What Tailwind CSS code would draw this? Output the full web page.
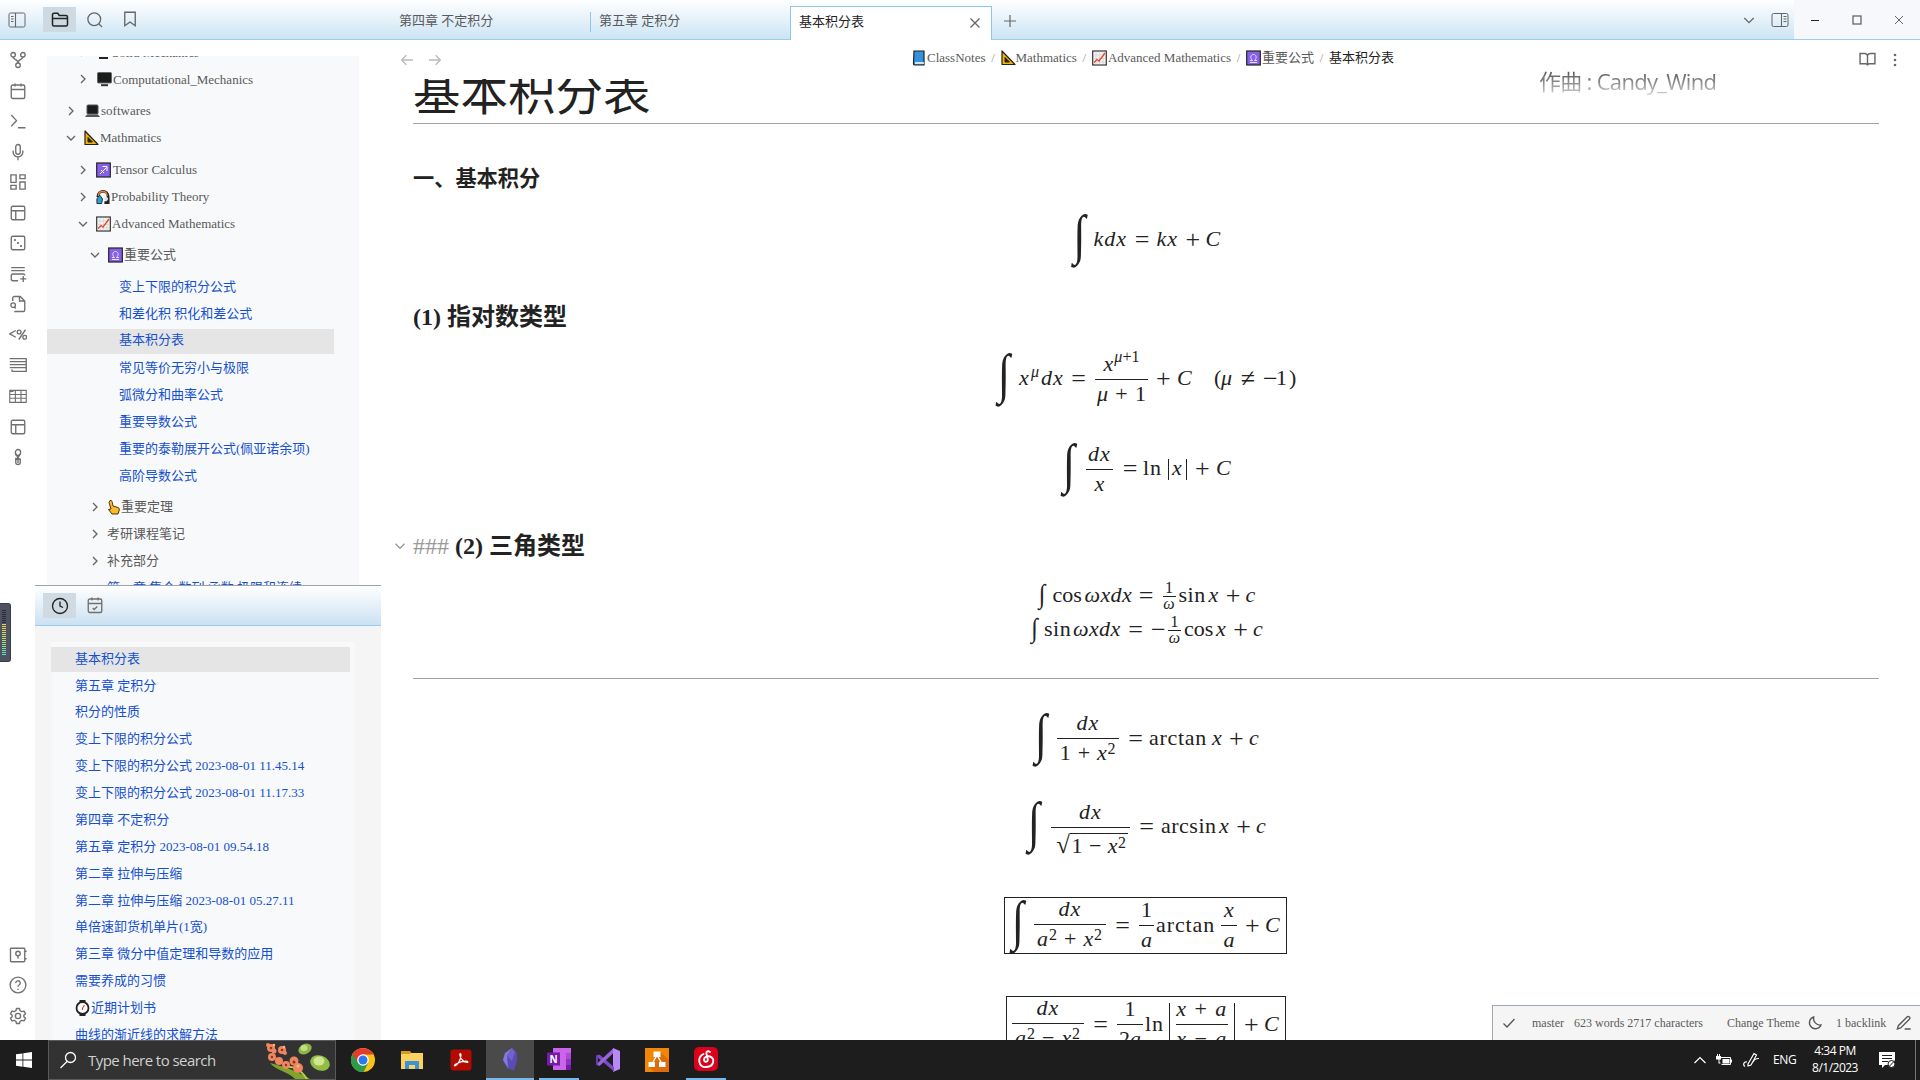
<!DOCTYPE html>
<html lang="zh-CN">
<head>
<meta charset="utf-8">
<title>基本积分表</title>
<script src="https://cdn.jsdelivr.net/npm/@tailwindcss/browser@4"></script>
</head>
<body class="w-[1920px] h-[1080px] overflow-hidden bg-white font-['Liberation_Serif','Noto_Sans_CJK_SC',serif] text-[13px] text-[#5a5a5a] flex flex-col">
<svg class="hidden">
  <defs>
    <symbol id="right" viewBox="0 0 24 24"><path d="m9 18 6-6-6-6"/></symbol>
    <symbol id="down" viewBox="0 0 24 24"><path d="m6 9 6 6 6-6"/></symbol>
    <symbol id="ruler" viewBox="0 0 15 16"><path d="M1 1v13.5h13z" fill="#f5b400" stroke="#222" stroke-width="1.2" stroke-linejoin="round"/><path d="M4 7.500v4.500h4.500z" fill="#222" stroke="#222" stroke-width="1"/></symbol>
    <symbol id="chart" viewBox="0 0 15 16"><rect x=".7" y="1" width="13.600" height="14" fill="#f3f3f3" stroke="#333" stroke-width="1.200"/><path d="M4 1.500v13M7.500 1.500v13M11 1.500v13M1 5h13M1 8.500h13M1 12h13" stroke="#ccc" stroke-width=".6"/><path d="M2 12.500l3-3 2 1.500 6-8" fill="none" stroke="#e8452c" stroke-width="1.300"/></symbol>
    <symbol id="omega" viewBox="0 0 15 16"><rect x=".7" y="1" width="13.600" height="14" fill="#8661e8" stroke="#222" stroke-width="1.200"/><path d="M4 12.500h7M4 10.500h2.500c-3-3-1.500-6 1-6s4 3 1 6H11" fill="none" stroke="#e9defc" stroke-width="1"/></symbol>
    <symbol id="calendar" viewBox="0 0 24 24"><rect x="3" y="4" width="18" height="18" rx="2"/><path d="M16 2v4M8 2v4M3 10h18"/></symbol>
    <symbol id="layout" viewBox="0 0 24 24"><rect x="3" y="3" width="18" height="18" rx="2"/><path d="M3 9h18M9 21V9"/></symbol>
  </defs>
</svg>

<!-- title bar -->
<header class="h-10 shrink-0 flex border-b border-[#9bcdf0] bg-linear-to-b from-white to-[#cbe4f4] [&_svg]:fill-none [&_svg]:stroke-[#666] [&_svg]:shrink-0">
  <div class="w-[390px] flex items-start pt-[7px]">
    <svg class="ml-[8px] mt-[4px] size-[18px]" viewBox="0 0 18 18"><rect x="1" y="2" width="16" height="14" rx="1.500"/><path d="M7.500 2v14M3 5.500h2.500M3 8h2.500M3 10.500h2.500" stroke-width="1.100"/></svg>
    <div class="ml-[17px] w-[33px] h-[25px] bg-[#cddae3] flex items-center justify-center"><svg class="size-[18px] stroke-[#222]!" viewBox="0 0 24 24" stroke-width="2"><path d="M22 9v9a2 2 0 0 1-2 2H4a2 2 0 0 1-2-2V5c0-1.100.900-2 2-2h5l2 3h9a2 2 0 0 1 2 2zM2 10h20"/></svg></div>
    <svg class="ml-[10px] mt-[4px] size-[18px]" viewBox="0 0 24 24" stroke-width="1.700"><circle cx="11" cy="11" r="8.500"/><path d="m21.500 21.500-4.500-4.500"/></svg>
    <svg class="ml-[17px] mt-[3px] size-[18px]" viewBox="0 0 24 24" stroke-width="1.800"><path d="m19 21-7-5-7 5V3h14z"/></svg>
  </div>
  <div class="w-[201px] mt-3 h-5 border-r border-[#8cc8ee] pl-[9px] leading-[18px]">第四章 不定积分</div>
  <div class="w-[199px] mt-3 h-5 pl-[8px] leading-[18px]">第五章 定积分</div>
  <div class="w-[202px] mt-[6px] h-[34px] bg-white border border-b-0 border-[#8cc8ee] pl-[8px] pr-[9px] flex items-center justify-between text-[#222] leading-[18px]"><span class="-mt-[4px]">基本积分表</span><svg class="size-[14px] -mt-[2px]" viewBox="0 0 14 14" stroke-width="1.300"><path d="M2.500 2.500l9 9M11.500 2.500l-9 9"/></svg></div>
  <svg class="ml-[11px] mt-[14px] size-[14px]" viewBox="0 0 14 14" stroke-width="1.200"><path d="M7 1v12M1 7h12"/></svg>
  <div class="flex-1 flex justify-end items-center">
    <svg class="size-[14px] mr-[15px]" viewBox="0 0 24 24" stroke-width="2.200"><path d="m4 8.500 8 8 8-8"/></svg>
    <svg class="size-[18px] mr-[5px]" viewBox="0 0 18 18"><rect x="1" y="2.500" width="16" height="13" rx="1.500"/><path d="M10.500 2.500v13M12.500 5.500h3M12.500 8h3M12.500 10.500h3" stroke-width="1.100"/></svg>
  </div>
  <div class="w-[126px] h-[39px] bg-[#f7f8fb] flex items-center justify-around">
    <svg class="size-[10px]" viewBox="0 0 10 10"><path d="M1 5.500h8" stroke="#222"/></svg>
    <svg class="size-[10px]" viewBox="0 0 10 10"><rect x="1" y="1" width="8" height="8" stroke-width="1.300"/></svg>
    <svg class="size-[10px]" viewBox="0 0 10 10"><path d="M1 1l8 8M9 1l-8 8"/></svg>
  </div>
</header>

<div class="flex h-[1000px] shrink-0 relative">
  <!-- ribbon -->
  <nav class="w-[35px] shrink-0 flex flex-col items-center pl-[1px] pt-[11px] pb-[15px] [&_svg]:size-[18px] [&_svg]:shrink-0 [&_svg]:fill-none [&_svg]:stroke-[#707070] [&_svg]:stroke-[1.8px] gap-[12.550px]">
    <svg viewBox="0 0 24 24"><circle cx="5.500" cy="5" r="3"/><circle cx="18.500" cy="5" r="3"/><circle cx="12" cy="19" r="3"/><path d="M5.500 8c0 4 6.500 2 6.500 8M18.500 8c0 4-6.500 2-6.500 8"/></svg>
    <svg><use href="#calendar"/></svg>
    <svg viewBox="0 0 24 24"><path d="m3 4 7 7.500L3 19M12 21h10"/></svg>
    <svg viewBox="0 0 24 24"><rect x="9" y="2" width="6" height="13" rx="3"/><path d="M5.500 10v2a6.500 6.500 0 0 0 13 0v-2M12 18.500V23"/></svg>
    <svg viewBox="0 0 24 24"><path d="M2.500 2.500h7v10h-7zM14.500 2.500h7v5h-7zM14.500 12h7v9.500h-7zM2.500 16.500h7v5h-7z"/></svg>
    <svg><use href="#layout"/></svg>
    <svg viewBox="0 0 24 24"><rect x="3" y="3" width="18" height="18" rx="2"/><path d="M8 6.800v2.400M12 10.800v2.400M16 14.800v2.400M6.800 8h2.400M10.800 12h2.400M14.800 16h2.400"/></svg>
    <svg viewBox="0 0 24 24"><path d="M3 3.500h18M3 7.500h18M12 21H5a2 2 0 0 1-2-2v-5a2 2 0 0 1 2-2h14a2 2 0 0 1 2 2M19 14.500v8M15 18.500h8"/></svg>
    <svg viewBox="0 0 24 24"><path d="M5 8V4a2 2 0 0 1 2-2h8l6 6v12a2 2 0 0 1-2 2H7M14 2v6h6M9 18l-2-2"/><circle cx="5.500" cy="13.500" r="3"/></svg>
    <svg viewBox="0 0 24 24"><path d="M9 6 1 10.500 9 15M22 5 13 18"/><circle cx="13.500" cy="8" r="2.500"/><circle cx="21" cy="15" r="2.500"/></svg>
    <svg viewBox="0 0 24 24"><path d="M1 3.500h22M1 7.500h22M1 11.500h22M1 15.500h22M4 20.500h19V3M4 18v3"/></svg>
    <svg viewBox="0 0 24 24" class="stroke-[1.500px]!"><path d="M1 4.500h22v16H1zM1 10h22M1 15h22M8.500 4v16M16 4v16"/><path d="M1 6h5"/></svg>
    <svg><use href="#layout"/></svg>
    <svg viewBox="0 0 24 24"><ellipse cx="12" cy="6" rx="3.500" ry="4"/><path d="M9 7c-1 4 5 5 5 9M14 8c1 4-6 6-5 10M9 13v6c0 4 6 4 6 0v-5M12 11v9"/></svg>
    <div class="flex-1"></div>
    <svg viewBox="0 0 24 24"><rect x="2" y="3" width="19" height="18" rx="1"/><circle cx="12" cy="10" r="3"/><path d="M12 13v4M21 7h2.500M21 17h2.500"/></svg>
    <svg viewBox="0 0 24 24"><circle cx="12" cy="12" r="10.500"/><path d="M9 9.500a3 3 0 1 1 4.500 2.500c-1 .6-1.500 1-1.500 2.300M12 17v1.500"/></svg>
    <svg viewBox="0 0 24 24"><circle cx="12" cy="12" r="3.500"/><path d="M10 2h4l.8 3 2.200 1.200 3-.8 2 3.500-2.200 2.100v2l2.200 2.100-2 3.500-3-.8-2.200 1.200-.8 3h-4l-.8-3L7 17.800l-3 .8-2-3.500L4.200 13v-2L2 8.900l2-3.500 3 .8L9.200 5z" stroke-linejoin="round"/></svg>
  </nav>

  <!-- side dock -->
  <aside class="w-[346px] shrink-0 flex flex-col">
    <div class="h-[545px] shrink-0 pt-4">
      <div class="ml-3 w-[312px] h-[529px] overflow-hidden bg-[#f8f9fb]">
        <div class="-mt-[16.500px] [&>div]:h-[26.900px] [&>div]:flex [&>div]:items-center [&>div]:whitespace-nowrap [&_svg]:shrink-0 [&>div]:pb-px">
          <div class="pl-[28px]"><svg class="size-4 fill-none stroke-[#666] stroke-2"><use href="#right"/></svg><svg class="ml-[5px] mr-px w-[15px] h-4" viewBox="0 0 15 16"><rect x="0" y="1" width="15" height="11" rx="1" fill="#222"/><path d="M3 14h9" stroke="#222" stroke-width="2"/></svg><span>Solid Mechanics</span></div>
          <div class="pl-[28px]"><svg class="size-4 fill-none stroke-[#666] stroke-2"><use href="#right"/></svg><svg class="ml-[6px] mr-px w-[15px] h-4" viewBox="0 0 15 16"><rect x=".5" y="1.500" width="14" height="10.500" rx="1" fill="#1c1c1c" stroke="#666"/><path d="M4 14.200h7" stroke="#333" stroke-width="2"/></svg><span>Computational_Mechanics</span></div>
          <div class="mt-[5px] pl-4"><svg class="size-4 fill-none stroke-[#666] stroke-2"><use href="#right"/></svg><svg class="ml-[6px] mr-px w-[15px] h-4" viewBox="0 0 15 16"><rect x="2" y="2" width="11" height="9" rx="1" fill="#1c1c1c" stroke="#555"/><path d="M0 14h15l-2-2.500H2z" fill="#555"/></svg><span>softwares</span></div>
          <div class="pl-4"><svg class="size-4 fill-none stroke-[#666] stroke-2"><use href="#down"/></svg><svg class="ml-[5px] w-[15px] h-4 mr-px"><use href="#ruler"/></svg><span>Mathmatics</span></div>
          <div class="mt-[5px] pl-[28px]"><svg class="size-4 fill-none stroke-[#666] stroke-2"><use href="#right"/></svg><svg class="ml-[5px] mr-[2px] w-[15px] h-4" viewBox="0 0 15 16"><rect x=".7" y="1" width="13.600" height="14" fill="#8661e8" stroke="#222" stroke-width="1.200"/><path d="M4 12l6.500-6.500M6.500 4.500h4.500V9M5 8l3 3" fill="none" stroke="#fff"/></svg><span>Tensor Calculus</span></div>
          <div class="pl-[28px]"><svg class="size-4 fill-none stroke-[#666] stroke-2"><use href="#right"/></svg><svg class="ml-[5px] mr-px w-[14px] h-4" viewBox="0 0 15 16"><path d="M2 8c0-8 11-8 11 0v6H9" fill="none" stroke="#222" stroke-width="3"/><path d="M2.500 7c0-6.500 9-6.500 9.500 0" fill="none" stroke="#e08040" stroke-width="1.500"/><path d="M1 15V10l3-4 3 4-1 5z" fill="#2d9fd8" stroke="#222"/><circle cx="11" cy="10" r="2" fill="#ddd"/></svg><span>Probability Theory</span></div>
          <div class="pl-[28px]"><svg class="size-4 fill-none stroke-[#666] stroke-2"><use href="#down"/></svg><svg class="ml-[5px] w-[15px] h-4 mr-px"><use href="#chart"/></svg><span>Advanced Mathematics</span></div>
          <div class="mt-[4.500px] pl-10"><svg class="size-4 fill-none stroke-[#666] stroke-2"><use href="#down"/></svg><svg class="ml-[5px] w-[15px] h-4 mr-px"><use href="#omega"/></svg><span>重要公式</span></div>
          <div class="mt-[5px] pl-[72px] text-[#1450cf]">变上下限的积分公式</div>
          <div class="pl-[72px] text-[#1450cf]">和差化积 积化和差公式</div>
          <div class="w-[287px] text-[#1450cf]"><span class="w-full bg-[#e5e5e5] pl-[72px] h-[25px] mt-[2px] leading-[22px]">基本积分表</span></div>
          <div class="pl-[72px] text-[#1450cf]">常见等价无穷小与极限</div>
          <div class="pl-[72px] text-[#1450cf]">弧微分和曲率公式</div>
          <div class="pl-[72px] text-[#1450cf]">重要导数公式</div>
          <div class="pl-[72px] text-[#1450cf]">重要的泰勒展开公式(佩亚诺余项)</div>
          <div class="pl-[72px] text-[#1450cf]">高阶导数公式</div>
          <div class="mt-[5px] pl-10"><svg class="size-4 fill-none stroke-[#666] stroke-2"><use href="#right"/></svg><svg class="ml-[4px] mr-px w-[13px] h-4" viewBox="0 0 13 16"><path d="M3 1.500c1.500-.5 2 .5 2.300 2L6 7l5 1.500c1.500.5 1.500 2 1 3.500l-1 3H5L1.500 10.500 4 10 2 3.500z" fill="#fcb827" stroke="#4a3510"/></svg><span>重要定理</span></div>
          <div class="pl-10"><svg class="mr-1 size-4 fill-none stroke-[#666] stroke-2"><use href="#right"/></svg>考研课程笔记</div>
          <div class="pl-10"><svg class="mr-1 size-4 fill-none stroke-[#666] stroke-2"><use href="#right"/></svg>补充部分</div>
          <div class="pl-[60px] text-[#1450cf]">第一章 集合 数列 函数 极限和连续</div>
        </div>
      </div>
    </div>
    <div class="h-[41px] shrink-0 border-t border-t-[#9da3a9] border-b border-b-[#9bcdf0] bg-linear-to-b from-white to-[#cbe1f2] flex items-start pt-[7px] pl-2">
      <div class="w-[33px] h-[25px] bg-[#d0dae2] flex items-center justify-center"><svg class="size-[18px] fill-none stroke-[#222] stroke-[1.8px]" viewBox="0 0 24 24"><circle cx="12" cy="12" r="10"/><path d="M12 6v6l4 2"/></svg></div>
      <svg class="ml-[10px] mt-[3px] size-[18px] fill-none stroke-[#707070] stroke-[1.8px]" viewBox="0 0 24 24"><rect x="3" y="4" width="18" height="18" rx="2"/><path d="M16 2v4M8 2v4M3 10h18M9 16l2 2 4-4"/></svg>
    </div>
    <div class="h-[414px] bg-[#f5f5f5] pt-4 pl-4 overflow-hidden">
      <div class="w-[304px] h-[420px] bg-[#f8f9fb] pt-[3px] text-[#1450cf] [&>div]:h-[26.880px] [&>div]:flex [&>div]:items-center [&>div]:pl-6 [&>div]:whitespace-nowrap">
        <div class="pl-0!"><span class="w-[299px] h-[25px] mt-[2px] bg-[#e5e5e5] pl-6 leading-[23px]">基本积分表</span></div>
        <div>第五章 定积分</div>
        <div>积分的性质</div>
        <div>变上下限的积分公式</div>
        <div>变上下限的积分公式 2023-08-01 11.45.14</div>
        <div>变上下限的积分公式 2023-08-01 11.17.33</div>
        <div>第四章 不定积分</div>
        <div>第五章 定积分 2023-08-01 09.54.18</div>
        <div>第二章 拉伸与压缩</div>
        <div>第二章 拉伸与压缩 2023-08-01 05.27.11</div>
        <div>单倍速卸货机单片(1宽)</div>
        <div>第三章 微分中值定理和导数的应用</div>
        <div>需要养成的习惯</div>
        <div><svg class="w-[15px] h-4 mr-px" viewBox="0 0 15 16"><path d="M4.500 0h6v16h-6z" fill="#222"/><circle cx="7.500" cy="8" r="6" fill="#fff" stroke="#222" stroke-width="1.800"/><path d="M7.500 8l2-3M7.500 8v2" stroke="#e33" stroke-width="1.200"/></svg>近期计划书</div>
        <div>曲线的渐近线的求解方法</div>
      </div>
    </div>
  </aside>

  <!-- note -->
  <main class="flex-1 flex flex-col pl-[8px] overflow-hidden">
    <div class="h-[39px] shrink-0 flex items-center relative">
      <svg class="ml-[10px] size-4 fill-none stroke-[#bbb] stroke-2" viewBox="0 0 24 24"><path d="m11 5-7 7 7 7M4 12h17"/></svg>
      <svg class="ml-3 size-4 fill-none stroke-[#bbb] stroke-2" viewBox="0 0 24 24"><path d="m13 5 7 7-7 7M20 12H3"/></svg>
      <div class="ml-[469px] flex items-center h-5 pb-[4px] whitespace-nowrap [&_em]:not-italic [&_em]:text-[#999] [&_em]:w-[15px] [&_em]:text-center [&_svg]:w-[15px] [&_svg]:h-4 [&_svg]:shrink-0">
        <svg viewBox="0 0 15 16"><path d="M2 1h10v14H2.500C1.500 15 1.500 14 1.500 13z" fill="#3492dc" stroke="#222" stroke-width="1.200"/><path d="M3 13h9" stroke="#fff" stroke-width="1.500"/></svg><span>ClassNotes</span><em>/</em>
        <svg><use href="#ruler"/></svg><span>Mathmatics</span><em>/</em>
        <svg><use href="#chart"/></svg><span class="ml-px">Advanced Mathematics</span><em>/</em>
        <svg><use href="#omega"/></svg><span class="ml-px">重要公式</span><em>/</em><span class="text-[#222]">基本积分表</span>
      </div>
      <div class="flex-1"></div>
      <svg class="mr-[11px] size-[17px] fill-none stroke-[#666] stroke-2" viewBox="0 0 24 24"><path d="M1.500 3.500H8a4 4 0 0 1 4 3v14c0-1.500-1-2.500-3-2.500H1.500zM22.500 3.500H16a4 4 0 0 0-4 3v14c0-1.500 1-2.500 3-2.500h7.500z"/></svg>
      <svg class="mr-[17px] size-4 fill-[#666]" viewBox="0 0 16 16"><circle cx="8" cy="3" r="1.300"/><circle cx="8" cy="8" r="1.300"/><circle cx="8" cy="13" r="1.300"/></svg>
    </div>
    <article class="ml-[24px] w-[1466px] h-[961px] overflow-hidden text-[#222]">
      <h1 class="h-[45px] flow-root border-b border-[#9ea3ab] text-[47.500px] leading-[45px]"><span class="block -mt-[7.500px]">基本积分表</span></h1>
      <h2 class="mt-[39px] h-8 leading-8 font-bold text-[21.200px]">一、基本积分</h2>

      <div class="text-[22px] leading-6 whitespace-nowrap [&_b]:font-normal [&_u]:no-underline [&_u]:text-[26px] [&_u]:text-center [&>div]:flex [&>div]:justify-center [&>div]:items-center [&>div>*]:shrink-0 [&>div>i]:pb-[2px] [&>div>b]:pb-[2px]">
        <div class="mt-[15px] h-[60px]">
          <span class="w-[19px] text-[44px] leading-[48px] italic scale-y-[1.24] translate-x-[2px] -translate-y-[4px]">∫</span><i class="ml-[3px] w-[33px] tracking-[1px]">kdx</i><u class="ml-[8px] w-[15px]">=</u><i class="ml-[7px] w-[22px] tracking-[1px]">kx</i><u class="ml-[7px] w-[14px]">+</u><i class="ml-[6px] w-[15px]">C</i>
        </div>
        <h3 class="mt-[31px] h-8 leading-8 font-bold text-[24px]">(1) 指对数类型</h3>
        <div class="mt-[16px] h-[60px]">
          <span class="w-[19px] text-[44px] leading-[48px] italic scale-y-[1.24] translate-x-[2px] -translate-y-[4px]">∫</span><i class="ml-[4px] w-[12px]">x</i><i class="w-[10px] text-[16px] -mt-3">μ</i><i class="w-[23px] tracking-[1px]">dx</i><u class="ml-[7px] w-[15px]">=</u>
          <span class="ml-[9px] w-[53px] flex flex-col text-center"><span class="pt-[2px] pb-[3px] flex justify-center"><i class="tracking-[1px]">x</i><span class="text-[16px] -mt-[7px]"><i>μ</i><b>+1</b></span></span><span class="h-px bg-[#222]"></span><span class="pt-[2px] pb-[3px] flex justify-between px-[2px]"><i>μ</i><b>+</b><b>1</b></span></span>
          <u class="ml-[8px] w-[14px]">+</u><i class="ml-[7px] w-[16px]">C</i><b class="ml-[21px] w-[7px]">(</b><i class="w-[13px]">μ</i><u class="ml-[6px] w-[16px]">≠</u><u class="ml-[7px] w-[13px]">−</u><b class="w-[11px]">1</b><b class="ml-[2px] w-[7px]">)</b>
        </div>
        <div class="mt-[30px] h-[60px]">
          <span class="w-[19px] text-[44px] leading-[48px] italic scale-y-[1.24] translate-x-[2px] -translate-y-[4px]">∫</span>
          <span class="ml-[6px] w-[27px] flex flex-col text-center"><i class="pt-[2px] pb-[3px] tracking-[1px]">dx</i><span class="h-px bg-[#222]"></span><i class="pt-[2px] pb-[3px]">x</i></span>
          <u class="ml-[9px] w-[16px]">=</u><b class="ml-[5px] w-[20px] tracking-[1px]">ln</b><span class="ml-[5px] w-px h-[21px] bg-[#222]"></span><i class="ml-[3px] w-[12px]">x</i><span class="ml-[2px] w-px h-[21px] bg-[#222]"></span><u class="ml-[8px] w-[14px]">+</u><i class="ml-[7px] w-[15px]">C</i>
        </div>
        <h3 class="mt-[31px] h-8 leading-8 font-bold text-[24px]"><span class="font-normal text-[#999]">###</span> (2) 三角类型</h3>
        <div class="mt-[17px] h-[34px]">
          <span class="w-[12px] text-[24px] leading-[24px] italic scale-y-[1.12] translate-x-[2px] -translate-y-[2px]">∫</span><b class="ml-[4px] w-[29px]">cos</b><i class="ml-[3px] w-[48px] tracking-[.4px]">ωxdx</i><u class="ml-[6px] w-[15px]">=</u>
          <span class="ml-[9px] w-[13px] flex flex-col text-center text-[16px] leading-4"><b>1</b><span class="h-px bg-[#222]"></span><i class="-mt-px pb-px">ω</i></span>
          <b class="ml-[3px] w-[27px] tracking-[.5px]">sin</b><i class="ml-[3px] w-[10px]">x</i><u class="ml-[7px] w-[15px]">+</u><i class="ml-[5px] w-[10px]">c</i>
        </div>
        <div class="h-[34px]">
          <span class="w-[12px] text-[24px] leading-[24px] italic scale-y-[1.12] translate-x-[2px] -translate-y-[2px]">∫</span><b class="ml-[3px] w-[27px] tracking-[.5px]">sin</b><i class="ml-[2px] w-[48px] tracking-[.4px]">ωxdx</i><u class="ml-[7px] w-[15px]">=</u><u class="ml-[8px] w-[13px]">−</u>
          <span class="ml-[4px] w-[13px] flex flex-col text-center text-[16px] leading-4"><b>1</b><span class="h-px bg-[#222]"></span><i class="-mt-px pb-px">ω</i></span>
          <b class="ml-[3px] w-[29px]">cos</b><i class="ml-[3px] w-[10px]">x</i><u class="ml-[7px] w-[15px]">+</u><i class="ml-[5px] w-[10px]">c</i>
        </div>
        <hr class="mt-[31px] h-px border-0 bg-[#9ea3ab]">
        <div class="mt-[30px] h-[60px]">
          <span class="w-[19px] text-[44px] leading-[48px] italic scale-y-[1.24] translate-x-[2px] -translate-y-[4px]">∫</span>
          <span class="ml-[5px] w-[62px] flex flex-col text-center"><i class="pt-[2px] pb-[3px] tracking-[1px]">dx</i><span class="h-px bg-[#222]"></span><span class="pt-[2px] pb-[3px] tracking-[.7px]"><b>1 + </b><i>x</i><b class="text-[16px] relative -top-[6px]">2</b></span></span>
          <u class="ml-[9px] w-[15px]">=</u><b class="ml-[6px] w-[59px] tracking-[.7px]">arctan</b><i class="ml-[4px] w-[10px]">x</i><u class="ml-[7px] w-[14px]">+</u><i class="ml-[6px] w-[10px]">c</i>
        </div>
        <div class="mt-[28px] h-[60px]">
          <span class="w-[19px] text-[44px] leading-[48px] italic scale-y-[1.24] translate-x-[2px] -translate-y-[4px]">∫</span>
          <span class="ml-[6px] w-[79px] flex flex-col"><i class="pt-[2px] pb-[3px] text-center tracking-[1px]">dx</i><span class="h-px bg-[#222]"></span><span class="pt-[5px] flex pl-[4px]"><b class="w-[15px] text-[25px] leading-6 text-right">√</b><span class="border-t border-[#222] w-[58px] leading-[24px] h-6 text-center tracking-[.5px]"><b>1 − </b><i>x</i><b class="text-[16px] relative -top-[5px]">2</b></span></span></span>
          <u class="ml-[9px] w-[15px]">=</u><b class="ml-[7px] w-[54px] tracking-[.5px]">arcsin</b><i class="ml-[4px] w-[10px]">x</i><u class="ml-[7px] w-[15px]">+</u><i class="ml-[5px] w-[10px]">c</i>
        </div>
        <div class="mt-[40px] ml-[591px] h-[57px] w-[283px] border border-[#222]">
          <span class="w-[19px] text-[44px] leading-[48px] italic scale-y-[1.24] translate-x-[2px] -translate-y-[4px]">∫</span>
          <span class="ml-[5px] w-[72px] flex flex-col text-center"><i class="pt-[2px] pb-[3px] tracking-[1px]">dx</i><span class="h-px bg-[#222]"></span><span class="pt-[2px] pb-[3px] tracking-[.8px]"><i>a</i><b class="text-[16px] relative -top-[6px]">2</b><b> + </b><i>x</i><b class="text-[16px] relative -top-[6px]">2</b></span></span>
          <u class="ml-[9px] w-[15px]">=</u>
          <span class="ml-[9px] w-[15px] flex flex-col text-center"><b class="pt-[2px] pb-[3px]">1</b><span class="h-px bg-[#222]"></span><i class="pt-[2px] pb-[3px]">a</i></span>
          <b class="ml-[2px] w-[59px] tracking-[.9px]">arctan</b>
          <span class="ml-[6px] w-[16px] flex flex-col text-center"><i class="pt-[2px] pb-[3px]">x</i><span class="h-px bg-[#222]"></span><i class="pt-[2px] pb-[3px]">a</i></span>
          <u class="ml-[8px] w-[14px]">+</u><i class="ml-[6px] w-[16px]">C</i>
        </div>
        <div class="mt-[42px] mx-auto h-[57px] w-[280px] border border-[#222]">
          <span class="w-[72px] flex flex-col text-center"><i class="pt-[2px] pb-[3px] tracking-[1px]">dx</i><span class="h-px bg-[#222]"></span><span class="pt-[2px] pb-[3px] tracking-[.8px]"><i>a</i><b class="text-[16px] relative -top-[6px]">2</b><b> − </b><i>x</i><b class="text-[16px] relative -top-[6px]">2</b></span></span>
          <u class="ml-[9px] w-[15px]">=</u>
          <span class="ml-[9px] w-[26px] flex flex-col text-center"><b class="pt-[2px] pb-[3px]">1</b><span class="h-px bg-[#222]"></span><span class="pt-[2px] pb-[3px]"><b>2</b><i>a</i></span></span>
          <b class="ml-[2px] w-[19px] tracking-[1px]">ln</b><span class="ml-[5px] w-px h-[43px] bg-[#222]"></span>
          <span class="ml-[6px] w-[52px] flex flex-col text-center"><span class="pt-[2px] pb-[3px] tracking-[1.500px]"><i>x</i><b> + </b><i>a</i></span><span class="h-px bg-[#222]"></span><span class="pt-[2px] pb-[3px] tracking-[1.500px]"><i>x</i><b> − </b><i>a</i></span></span>
          <span class="ml-[6px] w-px h-[43px] bg-[#222]"></span><u class="ml-[9px] w-[14px]">+</u><i class="ml-[6px] w-[16px]">C</i>
        </div>
      </div>
    </article>
  </main>

  <!-- fold handle beside the heading -->
  <svg class="absolute left-[391px] top-[497px] size-[18px] fill-none stroke-[#999] stroke-[1.8px]"><use href="#down"/></svg>

  <!-- lyric overlay -->
  <div class="absolute left-[1539px] top-[25px] text-[22px] leading-8 whitespace-nowrap font-['Open_Sans','Noto_Sans_CJK_SC',sans-serif] text-transparent bg-clip-text bg-linear-to-b from-[#555] from-20% to-[#ccc] to-90% tracking-[-.7px]">作曲 : Candy_Wind</div>

  <!-- level meter widget on the screen edge -->
  <div class="absolute left-0 top-[563px] w-[11px] h-[59px] rounded-r-[3px] bg-[#4e5263] border border-l-0 border-[#383b48] flex flex-col pt-[6px] pl-[2px]">
    <div class="w-1 h-[14px] bg-[repeating-linear-gradient(#2b2d36_0_1px,#4e5263_1px_2px)]"></div>
    <div class="w-1 h-[32px] bg-[repeating-linear-gradient(transparent_0_1px,#4e5263_1px_2px),linear-gradient(#f2cf45,#b5e36a,#4fe0c8)]"></div>
  </div>

  <!-- status bar -->
  <footer class="absolute right-0 bottom-0 w-[428px] h-[35px] bg-[#f5f5f5] border-l border-t border-[#9ea8b3] flex items-center text-[12px] whitespace-nowrap [&_svg]:fill-none [&_svg]:stroke-[#555] [&_svg]:shrink-0">
    <svg class="ml-[9px] size-[14px]" viewBox="0 0 14 14" stroke-width="1.300"><path d="M1.500 7.500 5 11l7.500-8"/></svg>
    <span class="ml-4 w-[42px]">master</span><span class="w-[153px]">623 words 2717 characters</span><span class="w-[80px]">Change Theme</span>
    <svg class="size-4" viewBox="0 0 24 24" stroke-width="2"><path d="M10 3a9 9 0 1 0 11 12A10 10 0 0 1 10 3z"/></svg>
    <span class="ml-[13px] w-[60px]">1 backlink</span>
    <svg class="size-4" viewBox="0 0 24 24" stroke-width="2"><path d="M13 21h9M16.500 3a2.100 2.100 0 0 1 3.500 3.500L7 19.500l-5 1.500 1.500-5z"/></svg>
  </footer>
</div>

<!-- taskbar -->
<div class="h-10 shrink-0 bg-[#1d1d1d] flex items-stretch font-['Open_Sans','Noto_Sans',sans-serif] text-white">
  <div class="w-12 flex items-center justify-center"><svg class="size-4" viewBox="0 0 16 16" fill="#fff"><path d="M0 2.300 6.500 1.400v6.200H0zM7.300 1.200 16 0v7.600H7.300zM0 8.400h6.500v6.300L0 13.800zM7.300 8.400H16V16l-8.700-1.200z"/></svg></div>
  <div class="w-[288px] bg-[#323232] border border-[#5a5a5a] flex items-center overflow-hidden">
    <svg class="ml-[10px] size-[18px] fill-none stroke-white" viewBox="0 0 18 18" stroke-width="1.300"><circle cx="11.500" cy="6.500" r="5"/><path d="M8 10.500 1.500 17"/></svg>
    <span class="ml-[11px] w-[177px] text-[15px] text-[#d0d0d0] tracking-[-.55px]">Type here to search</span>
    <svg class="w-[66px] h-[38px]" viewBox="0 0 66 38"><path d="M5 22c10 3 22 5 40 16H30C22 30 12 30 5 22z" fill="#7da52c"/><path d="M20 26c10-1 16 3 22 12" stroke="#b5d34a" stroke-width="2" fill="none"/><g fill="#f0865f"><circle cx="6" cy="7" r="4"/><circle cx="3" cy="4" r="2"/><circle cx="9" cy="10" r="2.500"/><circle cx="7" cy="16" r="4"/><circle cx="17" cy="9" r="4"/><circle cx="20" cy="12" r="2"/><circle cx="14" cy="20" r="4"/><circle cx="21" cy="24" r="4"/><circle cx="29" cy="20" r="4.500"/><circle cx="33" cy="27" r="5"/></g><g fill="#8c3524"><circle cx="6" cy="7" r="1.300"/><circle cx="7" cy="16" r="1.200"/><circle cx="17" cy="9" r="1.300"/><circle cx="29" cy="21" r="1.500"/><circle cx="21" cy="24" r="1.200"/></g><g fill="#fbb48f"><circle cx="9" cy="4" r="1.200"/><circle cx="19" cy="6" r="1.200"/><circle cx="33" cy="25" r="1.500"/></g><ellipse cx="40" cy="8" rx="7" ry="5" fill="#8db848" transform="rotate(-25 40 8)"/><ellipse cx="39" cy="7" rx="3.500" ry="3" fill="#c3dd85"/><ellipse cx="55" cy="22" rx="10" ry="7.500" fill="#92bd45" transform="rotate(20 55 22)"/><ellipse cx="54" cy="20" rx="5.500" ry="4.500" fill="#cfe594"/></svg>
  </div>
  <div class="w-[52px] pl-[2px] flex items-center justify-center"><svg class="size-6" viewBox="0 0 24 24"><circle cx="12" cy="12" r="12" fill="#fbc116"/><path d="M12 12 1.600 6A12 12 0 0 0 12.500 24L17.200 15z" fill="#2a9d4a"/><path d="M1.600 6A12 12 0 0 1 22.400 6.500H12L7 15z" fill="#e33b2e"/><circle cx="12" cy="12" r="5.800" fill="#fff"/><circle cx="12" cy="12" r="4.500" fill="#2f77ea"/></svg></div>
  <div class="w-[49px] pr-[2px] flex items-center justify-center"><svg class="w-[22px] h-5" viewBox="0 0 22 20"><path d="M0 1h9l1.500 2H22v4H0z" fill="#d99a1c"/><path d="M0 4h9l1-1h12v16H0z" fill="#fbd160"/><path d="M4 19v-8h14v8h-4v-4H8v4z" fill="#3b94da"/></svg></div>
  <div class="w-[49px] pr-[2px] flex items-center justify-center"><svg class="size-[22px]" viewBox="0 0 22 22"><rect x=".5" y=".5" width="21" height="21" rx="3" fill="#b30b00"/><path d="M5 17c2-.5 6-6 6-11 0-2-1.500-2-1.200 0 .7 4 4.200 7.500 7.200 7.500 1.500 0 1.200-1.300-1-1.300-3 0-7 1-10 2.800-1.500 1-2 1.800-1 2z" fill="none" stroke="#fff" stroke-width="1.200"/></svg></div>
  <div class="w-12 bg-[#4a4a4a] border-b-2 border-[#76b9ed] flex items-center justify-center"><svg class="w-[15px] h-[23px]" viewBox="0 0 15 23"><path d="M9 0 14 5v8l-3 9.500-6-2L0 12l2-7z" fill="#5b4cb5"/><path d="M9 0 4 8l1 12.500L0 12l2-7z" fill="#8479dc"/><path d="M9 0 4 8l5 5 3-9z" fill="#6f62cf"/></svg></div>
  <div class="w-10 ml-[5px] border-b-2 border-[#76b9ed] flex items-center justify-center"><svg class="size-6" viewBox="0 0 24 24"><path d="M6 1h18v22H6z" fill="#ca64ea"/><path d="M19 6h5v6h-5z" fill="#ae4bd5"/><path d="M19 12h5v5.500h-5z" fill="#9332bf"/><path d="M19 17.500h5V23h-5z" fill="#7719aa"/><rect y="5.500" width="13" height="13" fill="#7719aa"/><text x="6.500" y="15.500" font-size="10" font-weight="700" fill="#fff" text-anchor="middle">N</text></svg></div>
  <div class="w-[49px] ml-[4px] flex items-center justify-center"><svg class="size-6" viewBox="0 0 24 24"><path d="M17 0v24l7-3V3z" fill="#b78af5"/><path d="M1 7.500 3.500 6.500 18 19v4.500L1 9z" fill="#7a4cc4"/><path d="M17 .500v5L3.500 18 0 16.500z" fill="#9a63de"/><path d="M0 7.500 2 6.500v11l-2-1z" fill="#6a3db5"/></svg></div>
  <div class="w-[49px] flex items-center justify-center"><svg class="size-6" viewBox="0 0 24 24"><rect width="24" height="24" fill="#f08705"/><path d="M15 4 24 12v12H9l-6-6z" fill="#df6c0c"/><path d="M12 7 7 16M12 7l5 9" stroke="#fff" stroke-width="1.500"/><path d="M8.500 3.500h7v5.500h-7zM3.500 14h6.500v5H3.500zM14 14h6.500v5H14z" fill="#fff"/></svg></div>
  <div class="w-10 ml-[5px] border-b-2 border-[#76b9ed] flex items-center justify-center"><svg class="size-6" viewBox="0 0 24 24"><rect width="24" height="24" rx="5" fill="#dd001b"/><path d="M16 5c-2-1.500-4-.5-3.600 1.500l1.400 6c.3 3-3.800 3-3.800.3 0-2.800 3-4.300 6-3.300 5 2 4.500 10-3.500 10.500C4 20.500 3 10 9.500 7" fill="none" stroke="#fff" stroke-width="1.900" stroke-linecap="round"/></svg></div>
  <div class="flex-1"></div>
  <div class="flex items-center text-[12px] [&_svg]:shrink-0">
    <svg class="size-3 fill-none stroke-white" viewBox="0 0 12 12" stroke-width="1.200"><path d="m.5 9 5.500-5.500L11.500 9"/></svg>
    <svg class="ml-[10px] w-4 h-3" viewBox="0 0 16 12"><path d="M4.500 3.500h10v7h-9" fill="none" stroke="#fff"/><path d="M6.500 5h7v4.500h-7zM15 5.500h1v3h-1zM0 2h5v3.500H3.500v3h1v1h-2v-4H0zM1 0h1v2H1zM3 0h1v2H3z" fill="#fff"/></svg>
    <svg class="ml-[11px] size-4 fill-none stroke-white" viewBox="0 0 16 16" stroke-width="1.200"><path d="M5 12 11 1.500l2.500 1.500L8 13l-3 1zM4 10c-3-1-4.500 3-2 4.500M10 10c2-4 5-3.500 6-3.500"/></svg>
    <span class="ml-[14px] w-[26px] text-[12px] tracking-[-.3px]">ENG</span>
    <div class="ml-[10px] w-[52px] text-center leading-[17.500px] tracking-[-.5px] -mt-[2px]"><div>4:34 PM</div><div>8/1/2023</div></div>
    <svg class="ml-[18px] size-4" viewBox="0 0 16 16"><path d="M0 0h16v8l-4 5H6l-3 3v-3H0z" fill="#fff"/><path d="M3 3.500h10M3 6.500h10M3 9.500h6" stroke="#1d1d1d"/><circle cx="12.500" cy="12" r="3.500" fill="#fff" stroke="#1d1d1d"/><path d="M10 14.500l5-5" stroke="#1d1d1d"/></svg>
    <div class="ml-5 mr-1 w-px h-10 bg-[#777]"></div>
  </div>
</div>
</body>
</html>
